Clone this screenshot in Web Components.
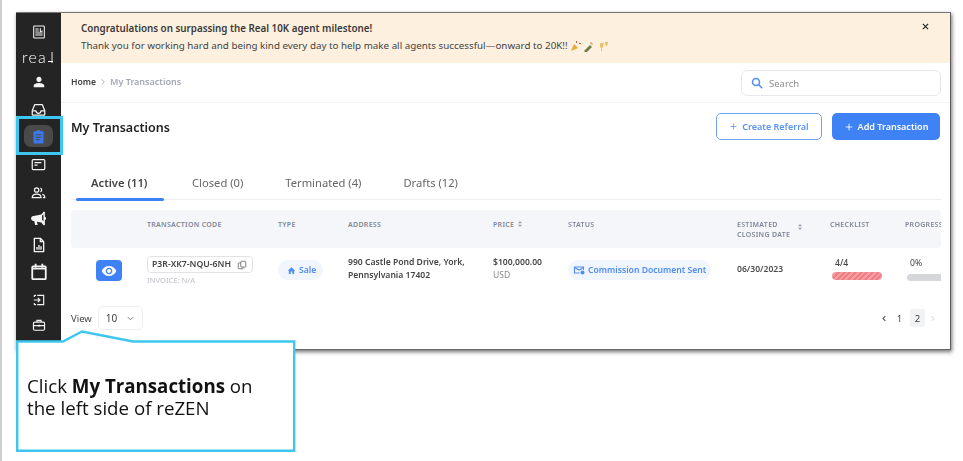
<!DOCTYPE html>
<html lang="en">
<head>
<meta charset="utf-8">
<title>My Transactions</title>
<style>
  html, body { margin: 0; padding: 0; background: #fff; }
  body { font-family: "Noto Sans", "Open Sans", sans-serif; }
</style>
</head>
<body>

<x-page>
  <x-frame>
    <x-sidebar slot="side"></x-sidebar>
    <x-banner></x-banner>
    <x-topbar></x-topbar>
    <x-titlebar>My Transactions</x-titlebar>
    <x-tabs></x-tabs>
    <x-table></x-table>
    <x-footer></x-footer>
  </x-frame>
  <x-highlight></x-highlight>
  <x-callout>Click <b>My Transactions</b> on<br>the left side of reZEN</x-callout>
</x-page>

<script>
(function () {
  "use strict";

  // --- icon set, everything on a 24 box ---
  const ICONS = {
    person: '<path fill="currentColor" d="M12 12c2.6 0 4.4-1.9 4.4-4.4S14.600 3 12 3 7.600 5 7.600 7.600 9.400 12 12 12zm0 1.800c-3 0-9 1.400-9 4.600V21h18v-2.600c0-3.200-6-4.600-9-4.600z"/>',
    news: '<g fill="none" stroke="currentColor" stroke-width="1.600"><rect x="4" y="3" width="16" height="18" rx="1"/><path d="M6.500 7.500h5M6.500 10.500h5M6.500 13.500h11M6.500 16.500h11M14 6.500v5l3.500-1"/></g>',
    inbox: '<g fill="none" stroke="currentColor" stroke-width="2" stroke-linejoin="round"><path d="M2 14 6 4h12l4 10v6a1 1 0 0 1-1 1H3a1 1 0 0 1-1-1z"/><path d="M2 14h6a4 4 0 0 0 8 0h6"/></g>',
    clip: '<path fill="currentColor" d="M18 3.500h-3.200C14.400 2.300 13.300 1.500 12 1.500s-2.400.8-2.800 2H6c-1.100 0-2 .9-2 2V21c0 1.100.9 2 2 2h12c1.100 0 2-.9 2-2V5.500c0-1.100-.9-2-2-2zM14 18H7.500v-1.800H14V18zm2.500-4h-9v-1.800h9V14zm0-4h-9V8.200h9V10z"/>',
    card: '<g fill="none" stroke="currentColor" stroke-width="2"><rect x="2" y="4" width="20" height="16" rx="1.500"/><path d="M5.500 9h11M5.500 13h5"/></g>',
    users: '<g fill="none" stroke="currentColor" stroke-width="2"><circle cx="9" cy="8" r="3.500"/><path d="M2 20c0-3.500 3-5.500 7-5.500s7 2 7 5.500z"/><path d="M15 4.800a3.500 3.500 0 0 1 0 6.400M18 14.800c2.500.6 4 2.400 4 5.200h-3"/></g>',
    horn: '<path fill="currentColor" d="M21 2.500h-1.800L16 6.200 5 8.500C3 8.900 1.500 10.200 1.500 12S3 15.100 5 15.500l1 .2 1.200 5.300h3.600l-1-4.500 6.200 1.300 3.200 3.700H21v-7.200c1-.4 1.700-1.300 1.700-2.300s-.7-1.900-1.700-2.300zm-2 13.400-2-2V8.100l2-2z"/>',
    report: '<g fill="none" stroke="currentColor" stroke-width="2" stroke-linejoin="round"><path d="M5 2h9l5 5v15H5z"/><path d="M14 2v5h5"/></g><path fill="currentColor" d="M8 15h2v4H8zM11 12h2v7h-2zM14 14h2v5h-2z"/>',
    cal: '<g fill="none" stroke="currentColor" stroke-width="2.400"><rect x="3" y="4.500" width="18" height="17" rx="1"/><path d="M7.500 1v5M16.500 1v5M3 7.500h18"/></g>',
    enter: '<g fill="none" stroke="currentColor" stroke-width="2"><path d="M9 4h11v16H9M4 4h3M4 20h3M4 4v3M4 17v3"/><path d="M3 12h10M10 8.500l3.500 3.500-3.500 3.500"/></g>',
    case: '<g fill="none" stroke="currentColor" stroke-width="2"><rect x="2.500" y="7" width="19" height="14" rx="2"/><path d="M8.500 7V4h7v3M2.500 13h19"/></g><path fill="currentColor" d="M10.500 11.500h3v3h-3z"/>',
    search: '<g fill="none" stroke="currentColor" stroke-width="3" stroke-linecap="round"><circle cx="10" cy="10" r="7"/><path d="m15.500 15.500 6 6"/></g>',
    plus: '<path fill="none" stroke="currentColor" stroke-width="2" d="M12 4v16M4 12h16"/>',
    close: '<path fill="none" stroke="currentColor" stroke-width="3" d="m5 5 14 14M19 5 5 19"/>',
    eye: '<path fill="currentColor" d="M12 4.500C7 4.500 2.700 7.600 1 12c1.700 4.400 6 7.500 11 7.500s9.300-3.100 11-7.500c-1.700-4.400-6-7.500-11-7.500zM12 17c-2.800 0-5-2.200-5-5s2.200-5 5-5 5 2.200 5 5-2.200 5-5 5zm0-8c-1.700 0-3 1.300-3 3s1.300 3 3 3 3-1.300 3-3-1.300-3-3-3z"/>',
    copy: '<g fill="none" stroke="currentColor" stroke-width="2" stroke-linejoin="round"><rect x="9" y="3" width="12" height="14" rx="2"/><path d="M9 7H5a2 2 0 0 0-2 2v10a2 2 0 0 0 2 2h8a2 2 0 0 0 2-2v-2"/></g>',
    home: '<path fill="currentColor" d="M10 21v-6.500h4V21h5v-8.500h3L12 3 2 12.500h3V21z"/>',
    mail: '<g fill="none" stroke="currentColor" stroke-width="2.200"><path d="M13 18H3V6h18v6"/><path d="m3 7 9 5 9-5"/></g><circle fill="currentColor" cx="19" cy="17" r="4"/>',
    sort: '<path fill="currentColor" d="m12 3 6 7H6zM12 21l-6-7h12z"/>',
    down: '<path fill="none" stroke="currentColor" stroke-width="2.500" d="m5 8.500 7 7 7-7"/>',
    left: '<path fill="none" stroke="currentColor" stroke-width="3.500" d="m15 4-8 8 8 8"/>',
    right: '<path fill="none" stroke="currentColor" stroke-width="3" d="m9 4 8 8-8 8"/>',
    chev: '<path fill="none" stroke="currentColor" stroke-width="2.500" d="m8 4 8 8-8 8"/>'
  };

  const icon = (name, size, color) =>
    `<svg width="${size}" height="${size}" viewBox="0 0 24 24" style="color:${color || 'currentColor'};display:block;flex:none">${ICONS[name]}</svg>`;

  // Small helper so every element below only has to give its html
  function define(tag, html) {
    customElements.define(tag, class extends HTMLElement {
      constructor() {
        super();
        this.attachShadow({ mode: 'open' }).innerHTML = html;
      }
    });
  }

  define('x-page', `
    <style>
      :host { display: block; position: relative; width: 963px; height: 461px; box-sizing: border-box;
              padding: 12px 0 0 14px; border-left: 2px solid #cfcfcf; overflow: hidden; background: #fff; }
    </style>
    <slot></slot>`);

  define('x-frame', `
    <style>
      :host { display: flex; width: 935px; height: 338px; box-sizing: border-box; background: #fff;
              border-top: 1px solid #777; border-right: 1px solid #5d5d5d; border-bottom: 1px solid #666;
              box-shadow: 1px 2px 4px rgba(0,0,0,.55); filter: blur(.3px); }
      .main { flex: 1; min-width: 0; display: flex; flex-direction: column; }
    </style>
    <slot name="side"></slot>
    <div class="main"><slot></slot></div>`);

  // pitch of the sidebar icons is not even, so each row carries its own gap
  const side = [
    ['news', 16, 0], ['logo', 0, 5], ['person', 14, 5], ['inbox', 15, 7], ['clip', 15, 7], ['card', 15, 8],
    ['users', 15, 8], ['horn', 17, 6], ['report', 16, 7], ['cal', 18, 7], ['enter', 14, 8], ['case', 14, 5]
  ];
  define('x-sidebar', `
    <style>
      :host { display: flex; flex-direction: column; align-items: center; width: 45px; flex: none; box-sizing: border-box;
              padding-top: 9px; background: #242424; color: #f4f4f4; }
      .it { height: 20px; width: 100%; display: flex; align-items: center; justify-content: center; flex: none; }
      .on { width: 29px; height: 22px; border-radius: 7px; background: #4a4a4a; display: flex; align-items: center; justify-content: center; }
      .logo { font: 300 16px/20px Lato, sans-serif; letter-spacing: 1.300px; color: #fff; position: relative; white-space: nowrap; }
      .logo i { font-style: normal; position: relative; margin-left: 3px; }
      .logo i::after { content: ""; position: absolute; right: 2px; bottom: 4px; width: 5px; height: 1px; background: #fff; }
    </style>
    ${side.map(([n, s, m]) => `<div class="it" style="margin-top:${m}px">${
      n === 'logo' ? '<span class="logo">rea<i>l</i></span>'
      : n === 'clip' ? `<div class="on">${icon(n, s, '#3b78ee')}</div>`
      : icon(n, s)}</div>`).join('')}`);

  define('x-banner', `
    <style>
      :host { display: flex; height: 50px; flex: none; box-sizing: border-box; background: #fdf0de; padding: 7px 20px 0 20px;
              color: #444; font-size: 9.800px; line-height: 17px; }
      .t { flex: 1; display: flex; flex-direction: column; }
      b { font-weight: 600; color: #3a3a3a; }
      .l2 { display: flex; align-items: center; gap: 2px; }
    </style>
    <div class="t">
      <b>Congratulations on surpassing the Real 10K agent milestone!</b>
      <div class="l2"><span>Thank you for working hard and being kind every day to help make all agents successful—onward to 20K!!</span>
        <svg width="40" height="12" viewBox="0 0 40 12" style="flex:none">
          <path d="M1 11 4 4l4 4z" fill="#e6a93c"/><path d="M6 1h1v2H6zM9 3h2v1H9z" fill="#d8574e"/>
          <path d="M14 11l6-6 2 2-6 6z" fill="#6c7f4e"/><path d="M21 2l2 2-1 1-2-2z" fill="#c9a24a"/>
          <path d="M30 3h4l-1 4-1 1v3h-1V8l-1-1z" fill="#e9c46a"/><path d="M35 2h3l-1 4h-1z" fill="#e4b95a"/>
        </svg>
      </div>
    </div>
    <div style="margin-top:2px">${icon('close', 9, '#222')}</div>`);

  define('x-topbar', `
    <style>
      :host { display: flex; height: 40px; flex: none; box-sizing: border-box; align-items: center; justify-content: space-between;
              padding: 0 9px 0 10px; border-bottom: 1px solid #f3f3f3; font-size: 8.600px; font-weight: 600; }
      .crumb { display: flex; align-items: center; gap: 3px; margin-top: -2px; color: #3f3f3f; }
      .crumb span:last-child { color: #a4a8b6; font-size: 9px; }
      .search { width: 200px; height: 26px; box-sizing: border-box; border: 1px solid #e6e8ee; border-radius: 6px; display: flex;
                align-items: center; gap: 6px; padding-left: 9px; margin-top: 1px; color: #8e8e8e; font-size: 9.500px; font-weight: 400; }
    </style>
    <div class="crumb"><span>Home</span>${icon('chev', 8, '#aaa')}<span>My Transactions</span></div>
    <div class="search">${icon('search', 12, '#4f8ef0')}<span>Search</span></div>`);

  define('x-titlebar', `
    <style>
      :host { display: flex; height: 47px; flex: none; box-sizing: border-box; align-items: flex-start; justify-content: space-between;
              padding: 10px 10px 0 10px; }
      h1 { margin: 6px 0 0; font-size: 12.500px; line-height: 17px; font-weight: 600; color: #222; }
      .btns { display: flex; gap: 10px; }
      .b { height: 27px; box-sizing: border-box; border-radius: 5px; display: flex; align-items: center; justify-content: center; gap: 4px;
           font-size: 9px; font-weight: 600; }
      .a { width: 106px; border: 1px solid #6fa3f5; color: #5a93f2; background: #fff; }
      .c { width: 108px; background: #3f82f5; color: #fff; }
    </style>
    <h1><slot></slot></h1>
    <div class="btns">
      <div class="b a">${icon('plus', 9)}Create Referral</div>
      <div class="b c">${icon('plus', 10)}Add Transaction</div>
    </div>`);

  define('x-tabs', `
    <style>
      :host { display: block; height: 50px; flex: none; box-sizing: border-box; margin: 0 9px 0 10px; border-bottom: 1px solid #eeeef0; }
      .row { display: flex; font-size: 11.200px; color: #666; line-height: 16px; padding: 25px 0 0 5px; }
      .tab { padding: 0 15px 8px; position: relative; white-space: nowrap; }
      .tab.on { font-weight: 600; color: #444; width: 58px; }
      .tab.on::after { content: ""; position: absolute; left: 0; right: 0; bottom: -2px; height: 3px; border-radius: 2px; background: #3f82f5; }
      .t1 { margin-left: 13px; } .t2, .t3 { margin-left: 12px; }
    </style>
    <div class="row">
      <div class="tab on">Active (11)</div>
      <div class="tab t1">Closed (0)</div>
      <div class="tab t2">Terminated (4)</div>
      <div class="tab t3">Drafts (12)</div>
    </div>`);

  define('x-table', `
    <style>
      :host { display: block; flex: none; margin: 10px 9px 0 10px; overflow: hidden; }
      .g { display: grid; grid-template-columns: 76px 131px 70px 145px 75px 169px 93px 75px 36px; }
      .head { height: 38px; background: #f5f6fa; border-radius: 4px; font-size: 7px; line-height: 10px; font-weight: 600;
              color: #7f8696; letter-spacing: .3px; padding-top: 10px; box-sizing: border-box; white-space: nowrap; }
      .head .s { display: flex; align-items: flex-start; gap: 2px; }
      .row { height: 44px; font-size: 8.600px; line-height: 13px; font-weight: 600; color: #444; }
      .eye { width: 26px; height: 21px; background: #3f82f5; border-radius: 4px; color: #fff; margin: 12px 0 0 25px;
             display: flex; align-items: center; justify-content: center; }
      .code { width: 106px; height: 17px; box-sizing: border-box; border: 1px solid #e3e3e6; border-radius: 4px; margin-top: 8px;
              display: flex; align-items: center; justify-content: space-between; padding: 0 5px 0 4px; color: #444; white-space: nowrap; font-size: 8.700px; }
      .inv { color: #c5c8cf; font-size: 7.500px; font-weight: 500; line-height: 10px; margin-top: 2px; }
      .pill { display: inline-flex; align-items: center; height: 20px; margin-top: 12px; background: #f0f5fe; border-radius: 10px;
              color: #4f8ef0; gap: 3px; white-space: nowrap; box-sizing: border-box; }
      .a1 { padding-top: 8px; }
      .usd { font-weight: 400; color: #888; }
      .date { padding-top: 15px; color: #4d4d4d; }
      .cnt { padding: 9px 0 0 5px; font-weight: 500; line-height: 12px; }
      .bar { border-radius: 4px; }
      .red { height: 8px; width: 50px; margin: 3px 0 0 2px; background: repeating-linear-gradient(135deg, #ef7f85 0 2px, #f4a0a3 2px 4px); }
      .gray { height: 7px; width: 40px; margin: 5px 0 0 2px; background: #d5d7db; }
    </style>
    <div class="g head">
      <div></div><div>TRANSACTION CODE</div><div>TYPE</div><div>ADDRESS</div>
      <div class="s">PRICE ${icon('sort', 8, '#9a9fad')}</div><div>STATUS</div>
      <div class="s"><span>ESTIMATED<br>CLOSING DATE</span><span style="margin:3px 0 0 4px">${icon('sort', 8, '#9a9fad')}</span></div>
      <div>CHECKLIST</div><div>PROGRESS</div>
    </div>
    <div class="g row">
      <div><div class="eye">${icon('eye', 16)}</div></div>
      <div><div class="code">P3R-XK7-NQU-6NH ${icon('copy', 10, '#666')}</div><div class="inv">INVOICE: N/A</div></div>
      <div><span class="pill" style="width:45px;padding-left:9px">${icon('home', 9)}Sale</span></div>
      <div class="a1">990 Castle Pond Drive, York,<br>Pennsylvania 17402</div>
      <div class="a1">$100,000.00<br><span class="usd">USD</span></div>
      <div><span class="pill" style="width:143px;padding-left:5px">${icon('mail', 12)}Commission Document Sent</span></div>
      <div class="date">06/30/2023</div>
      <div><div class="cnt">4/4</div><div class="bar red"></div></div>
      <div><div class="cnt" style="font-weight:400">0%</div><div class="bar gray"></div></div>
    </div>`);

  define('x-footer', `
    <style>
      :host { display: flex; flex: none; align-items: center; justify-content: space-between; height: 24px; margin-top: 14px;
              padding: 0 14px 0 10px; font-size: 9.500px; color: #444; }
      .v { display: flex; align-items: center; gap: 6px; }
      .sel { width: 45px; height: 24px; box-sizing: border-box; border: 1px solid #eceef2; border-radius: 5px; display: flex;
             align-items: center; justify-content: space-between; padding: 0 7px; font-size: 10px; }
      .p { display: flex; align-items: center; }
      .n { width: 15px; height: 18px; display: flex; align-items: center; justify-content: center; }
      .cur { background: #f2f3f5; border-radius: 2px; margin-left: 3px; }
    </style>
    <div class="v">View <div class="sel">10 ${icon('down', 9, '#777')}</div></div>
    <div class="p">${icon('left', 7, '#444')}<div class="n" style="margin-left:4px">1</div><div class="n cur">2</div><span style="margin-left:4px">${icon('right', 7, '#c6c6c6')}</span></div>`);

  // Overlay: cyan box around the active sidebar entry
  define('x-highlight', `
    <style>
      :host { position: absolute; left: 14px; top: 116px; width: 47px; height: 39px; box-sizing: border-box; border: 3px solid #3fc6ee; }
    </style>`);

  // Overlay: speech callout with a beak pointing up at the sidebar
  define('x-callout', `
    <style>
      :host { position: absolute; left: 14px; top: 330px; width: 281px; height: 122px; box-sizing: border-box; padding: 45px 0 0 11px;
              font: 400 18.700px/22px "Open Sans", sans-serif; color: #111; }
      svg { position: absolute; left: 0; top: 0; }
      div { position: relative; }
      ::slotted(b) { font-weight: 700; }
    </style>
    <svg width="281" height="122" viewBox="0 0 281 122">
      <path d="M1.200 11.500H47L66 1.500 117 11.500H278.200V120.800H1.200z" fill="#fff" stroke="#3fc6ee" stroke-width="2.400"/>
    </svg>
    <div><slot></slot></div>`);
})();
</script>
</body>
</html>
